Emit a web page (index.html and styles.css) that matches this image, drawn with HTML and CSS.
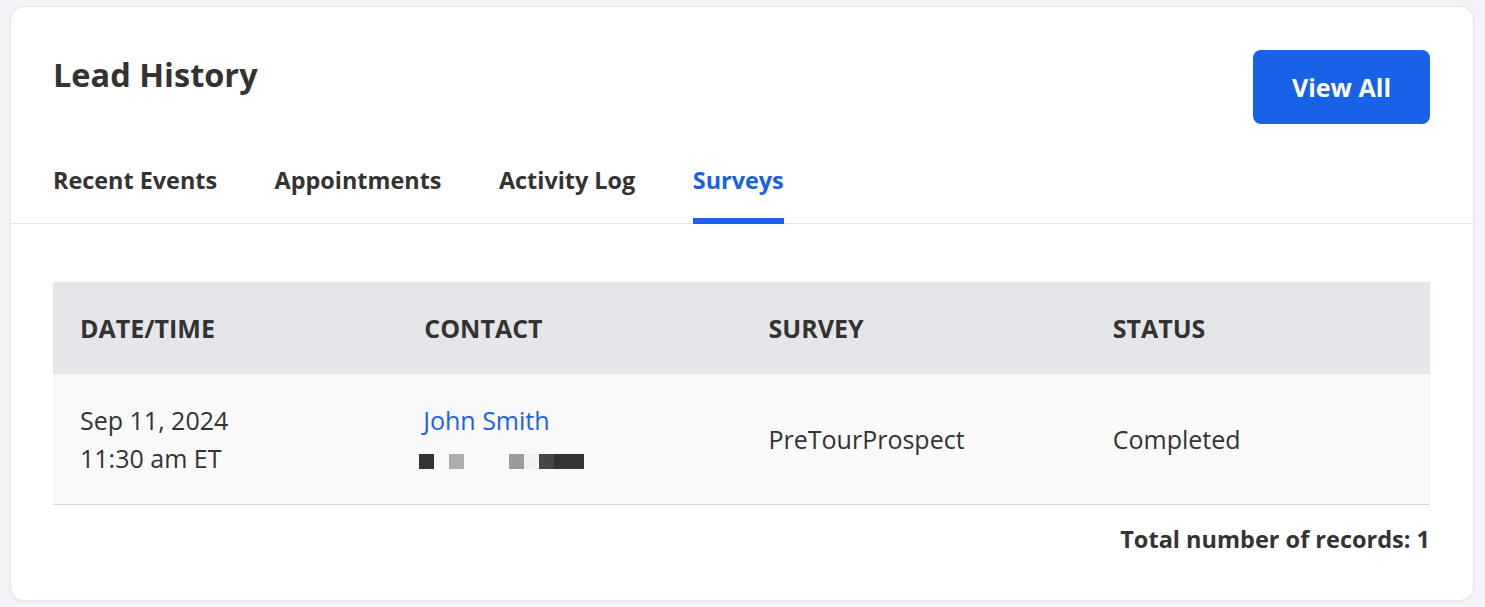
FILE: index.html
```html
<!DOCTYPE html>
<html lang="en">
<head>
<meta charset="utf-8">
<title>Lead History</title>
<link rel="stylesheet" href="styles.css">
</head>
<body>
<section class="card">
  <div class="card-head">
    <h2 class="title">Lead History</h2>
    <button class="btn-primary" type="button">View All</button>
  </div>
  <nav class="tabs">
    <a class="tab">Recent Events</a>
    <a class="tab">Appointments</a>
    <a class="tab">Activity Log</a>
    <a class="tab active">Surveys</a>
  </nav>
  <div class="card-body">
    <div class="table">
      <div class="thead">
        <div class="th">DATE/TIME</div>
        <div class="th">CONTACT</div>
        <div class="th">SURVEY</div>
        <div class="th">STATUS</div>
      </div>
      <div class="tr">
        <div class="td">
          <div class="line">Sep 11, 2024</div>
          <div class="line">11:30 am ET</div>
        </div>
        <div class="td">
          <a class="link line">John Smith</a>
          <div class="redacted">
            <span class="px dark"></span><span class="gap"></span><span class="px light"></span><span class="gap wide"></span><span class="px mid"></span><span class="px pale"></span><span class="px dim"></span><span class="px dark double"></span>
          </div>
        </div>
        <div class="td"><div class="line">PreTourProspect</div></div>
        <div class="td"><div class="line">Completed</div></div>
      </div>
    </div>
    <div class="total">Total number of records: 1</div>
  </div>
</section>
</body>
</html>
```

FILE: styles.css
```css
* { box-sizing: border-box; }

html, body {
  margin: 0;
  padding: 0;
  background: #f3f4f8;
}

body {
  padding: 6px 11px 6px 10px;
  font-family: "Open Sans", "Noto Sans", "Liberation Sans", sans-serif;
  color: #333333;
}

.card {
  background: #ffffff;
  border: 1px solid #e6e7ec;
  border-radius: 14px;
  box-shadow: 0 1px 3px rgba(20, 30, 60, 0.06);
  height: 595px;
  overflow: hidden;
}

.card-head {
  display: flex;
  justify-content: space-between;
  align-items: flex-start;
  padding: 43px 43px 0 42px;
}

.title {
  margin: 0;
  padding-top: 2px;
  font-size: 32.5px;
  line-height: 46px;
  font-weight: 700;
  color: #333333;
}

.btn-primary {
  width: 177px;
  height: 74px;
  border: 0;
  border-radius: 8px;
  background: #1762e6;
  color: #ffffff;
  font-family: inherit;
  font-size: 25px;
  font-weight: 700;
  cursor: pointer;
}

.tabs {
  display: flex;
  gap: 57.5px;
  padding: 40px 42px 0;
  border-bottom: 1px solid #e4e5ea;
}

.tab {
  font-size: 23.4px;
  line-height: 33px;
  font-weight: 700;
  color: #333333;
  padding-bottom: 21px;
  border-bottom: 6px solid transparent;
  margin-bottom: -1px;
}

.tab.active {
  color: #1762e6;
  border-bottom-color: #1762e6;
}

.card-body {
  padding: 58px 43px 0 42px;
}

.thead, .tr {
  display: grid;
  grid-template-columns: repeat(4, 1fr);
}

.thead {
  background: #e5e6ea;
  height: 92px;
  align-items: center;
}

.th {
  padding-left: 27px;
  font-size: 25px;
  line-height: 34px;
  font-weight: 700;
  color: #333333;
}

.tr {
  background: #f9f9f9;
  height: 131px;
  border-bottom: 1px solid #d9dae1;
  align-items: center;
}

.td {
  padding-left: 27px;
  font-size: 25px;
  color: #333333;
}

.line {
  display: block;
  line-height: 38px;
}

.link {
  color: #1a63e8;
  text-decoration: none;
  margin-left: -1px;
}

.redacted {
  display: flex;
  height: 15px;
  margin: 15px 0 8px -5px;
}

.px { width: 15px; height: 15px; }
.gap { width: 15px; }
.gap.wide { width: 45px; }
.dark { background: #333333; }
.light { background: #adadad; }
.mid { background: #9a9a9a; }
.pale { background: #f2f2f2; }
.dim { background: #454545; }
.px.double { width: 30px; }

.total {
  margin-top: 18px;
  text-align: right;
  font-size: 23.5px;
  line-height: 33px;
  font-weight: 700;
  color: #333333;
}
```
